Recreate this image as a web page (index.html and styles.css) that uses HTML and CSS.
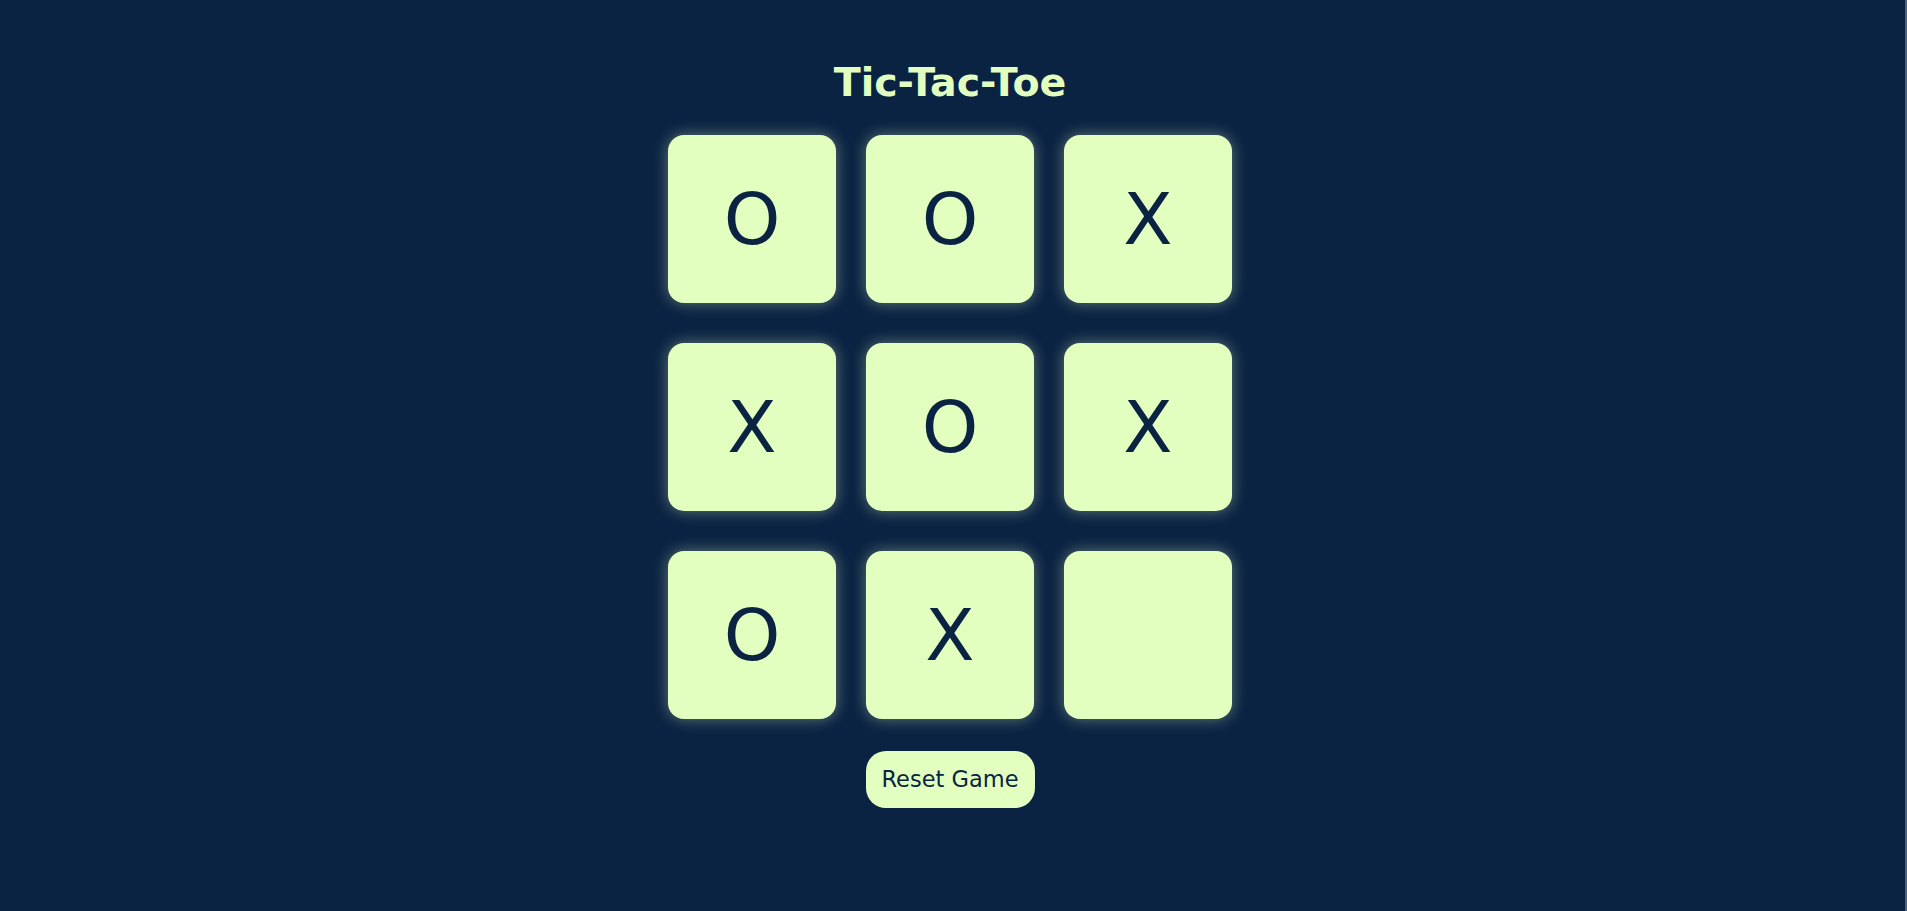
FILE: index.html
```html
<!DOCTYPE html>
<html lang="en">
<head>
<meta charset="utf-8">
<title>Tic-Tac-Toe</title>
<link rel="stylesheet" href="styles.css">
</head>
<body>
<main class="game">
  <h1 class="title">Tic-Tac-Toe</h1>
  <div class="board">
    <div class="cell">O</div>
    <div class="cell">O</div>
    <div class="cell">X</div>
    <div class="cell">X</div>
    <div class="cell">O</div>
    <div class="cell">X</div>
    <div class="cell">O</div>
    <div class="cell">X</div>
    <div class="cell"></div>
  </div>
  <button class="reset">Reset Game</button>
</main>
</body>
</html>
```
FILE: styles.css
```css
html, body {
  margin: 0;
  height: 100%;
}
body {
  background: #0b2343;
  border-right: 2px solid #4f6380;
  box-sizing: border-box;
  font-family: "DejaVu Sans", "Noto Sans", sans-serif;
}
.game {
  display: flex;
  flex-direction: column;
  align-items: center;
  padding: 58px 5px 0 0;
}
.title {
  margin: 0;
  font-size: 39.5px;
  line-height: 48px;
  font-weight: 700;
  color: #e2ffc0;
}
.board {
  margin-top: 29px;
  display: grid;
  grid-template-columns: repeat(3, 168px);
  grid-auto-rows: 168px;
  column-gap: 30px;
  row-gap: 40px;
}
.cell {
  background: #e2ffc0;
  border-radius: 16px;
  box-shadow: 0 0 15px rgba(226, 255, 192, 0.4);
  display: flex;
  align-items: center;
  justify-content: center;
  font-size: 72px;
  color: #0b2343;
}
.reset {
  margin-top: 32px;
  border: none;
  background: #e2ffc0;
  color: #0b2343;
  font-family: "DejaVu Sans", "Noto Sans", sans-serif;
  font-size: 22.5px;
  line-height: 33px;
  padding: 12px 16px;
  border-radius: 20px;
}
```
